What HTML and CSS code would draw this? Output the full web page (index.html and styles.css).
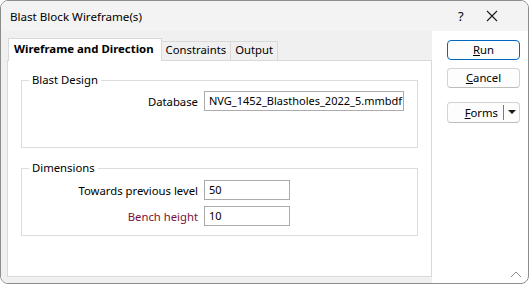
FILE: index.html
```html
<!DOCTYPE html>
<html>
<head>
    <meta http-equiv="content-type" content="text/html; charset=UTF-8">
    <title>Blast Block Wireframe(s)</title>
    <link rel="stylesheet" href="styles.css">
</head>

<body>
    <div class="window">
        <div class="titlebar">
            <span class="title">Blast Block Wireframe(s)</span>
            <span class="help">?</span>
            <svg class="close" width="12" height="12" viewBox="0 0 12 12">
                <path d="M 1,1 L 11,11 M 11,1 L 1,11"></path>
            </svg>
        </div>

        <div class="client">
            <div class="tabarea">
                <div class="tabs">
                    <div class="tab active">Wireframe and Direction</div>
                    <div class="tab">Constraints</div>
                    <div class="tab">Output</div>
                </div>
                <div class="panel">
                    <div class="group">
                        <span class="legend">Blast Design</span>
                        <div class="rows">
                            <label>Database</label>
                            <div class="field wide">NVG_1452_Blastholes_2022_5.mmbdf</div>
                        </div>
                    </div>
                    <div class="group">
                        <span class="legend">Dimensions</span>
                        <div class="rows">
                            <label>Towards previous level</label>
                            <div class="field short">50</div>
                            <label class="required">Bench height</label>
                            <div class="field short">10</div>
                        </div>
                    </div>
                </div>
            </div>

            <div class="buttons">
                <div class="btn default"><u>R</u>un</div>
                <div class="btn"><u>C</u>ancel</div>
                <div class="btn split">
                    <span class="split-label"><u>F</u>orms</span>
                    <span class="split-arrow">
                        <svg width="8" height="5" viewBox="0 0 8 5"><path d="M 0,0 L 8,0 4,4 Z"></path></svg>
                    </span>
                </div>
            </div>

            <svg class="grip" width="12" height="7" viewBox="0 0 12 7">
                <path d="M 1,6 L 6,1 11,6"></path>
            </svg>
        </div>
    </div>
</body>

</html>
```

FILE: styles.css
```css
html {
    background: #ffffff;
}

body {
    margin: 0;
    font-family: "Noto Sans", "Open Sans", sans-serif;
    font-size: 11.3px;
    color: #000000;
}

.window {
    position: relative;
    width: 529px;
    height: 284px;
    box-sizing: border-box;
    border: 1px solid #8c8c8c;
    border-radius: 8px;
    overflow: hidden;
    background: #ffffff;
}

.titlebar {
    height: 30px;
    background: #f3f3f3;
    display: flex;
    align-items: center;
    padding-left: 9px;
    font-size: 11.6px;
}

.title {
    flex: 1;
}

.help {
    width: 12px;
    margin-right: 16px;
    font-size: 13px;
}

.close {
    margin-right: 30px;
    fill: none;
    stroke: #1a1a1a;
    stroke-width: 1.1px;
}

.client {
    display: flex;
    height: 252px;
}

.tabarea {
    width: 431px;
    background: #f0f0f0;
    padding: 7px 0 0 6px;
    box-sizing: border-box;
}

.tabs {
    display: flex;
    align-items: flex-end;
    height: 22px;
    margin-left: 1px;
}

.tab {
    height: 19px;
    box-sizing: border-box;
    padding: 0 4px;
    border: 1px solid #d9d9d9;
    border-bottom: none;
    border-left: none;
    background: #f0f0f0;
    line-height: 16px;
}

.tab.active {
    height: 23px;
    margin-bottom: -1px;
    padding: 0 7px 0 5px;
    border-left: 1px solid #d9d9d9;
    background: #ffffff;
    font-weight: bold;
    font-size: 11.4px;
    line-height: 19px;
    position: relative;
}

.panel {
    height: 217px;
    box-sizing: border-box;
    border: 1px solid #d9d9d9;
    background: #ffffff;
    padding: 19px 13px 0 13px;
}

.group {
    position: relative;
    height: 68px;
    box-sizing: border-box;
    border: 1px solid #dcdcdc;
    margin-bottom: 20px;
}

.legend {
    position: absolute;
    top: -10px;
    left: 7px;
    padding: 0 3px;
    background: #ffffff;
    line-height: 18px;
}

.rows {
    display: grid;
    grid-template-columns: 176px auto;
    column-gap: 6px;
    row-gap: 6px;
    align-items: center;
    padding-top: 10px;
}

.group + .group .rows {
    padding-top: 11px;
}

label {
    text-align: right;
}

.required {
    color: #7d0f3a;
}

.field {
    height: 20px;
    box-sizing: border-box;
    border: 1px solid #ababab;
    padding-left: 4px;
    line-height: 18px;
    background: #ffffff;
    font-size: 11px;
    white-space: nowrap;
    overflow: hidden;
}

.wide {
    width: 200px;
}

.short {
    width: 86px;
}

.buttons {
    display: flex;
    flex-direction: column;
    padding: 9px 0 0 15px;
}

.btn {
    width: 73px;
    height: 20px;
    box-sizing: border-box;
    border: 1px solid #d3d3d3;
    border-bottom-color: #bcbcbc;
    border-radius: 4px;
    background: #fdfdfd;
    text-align: center;
    line-height: 18px;
    margin-bottom: 8px;
}

.btn.default {
    border: 1.5px solid #0067c0;
    line-height: 17px;
}

.btn.split {
    margin-top: 6px;
    height: 21px;
    display: flex;
}

.split-label {
    flex: 1;
    text-align: right;
    padding-right: 5px;
    border-right: 1px solid #7a7a7a;
    margin: 2px 0;
    line-height: 15px;
}

.split-arrow {
    width: 15px;
    display: flex;
    align-items: center;
    justify-content: center;
}

.split-arrow svg {
    fill: #1a1a1a;
}

.grip {
    position: absolute;
    right: 6px;
    bottom: 5px;
    fill: none;
    stroke: #8a8a8a;
    stroke-width: 1px;
}
```
